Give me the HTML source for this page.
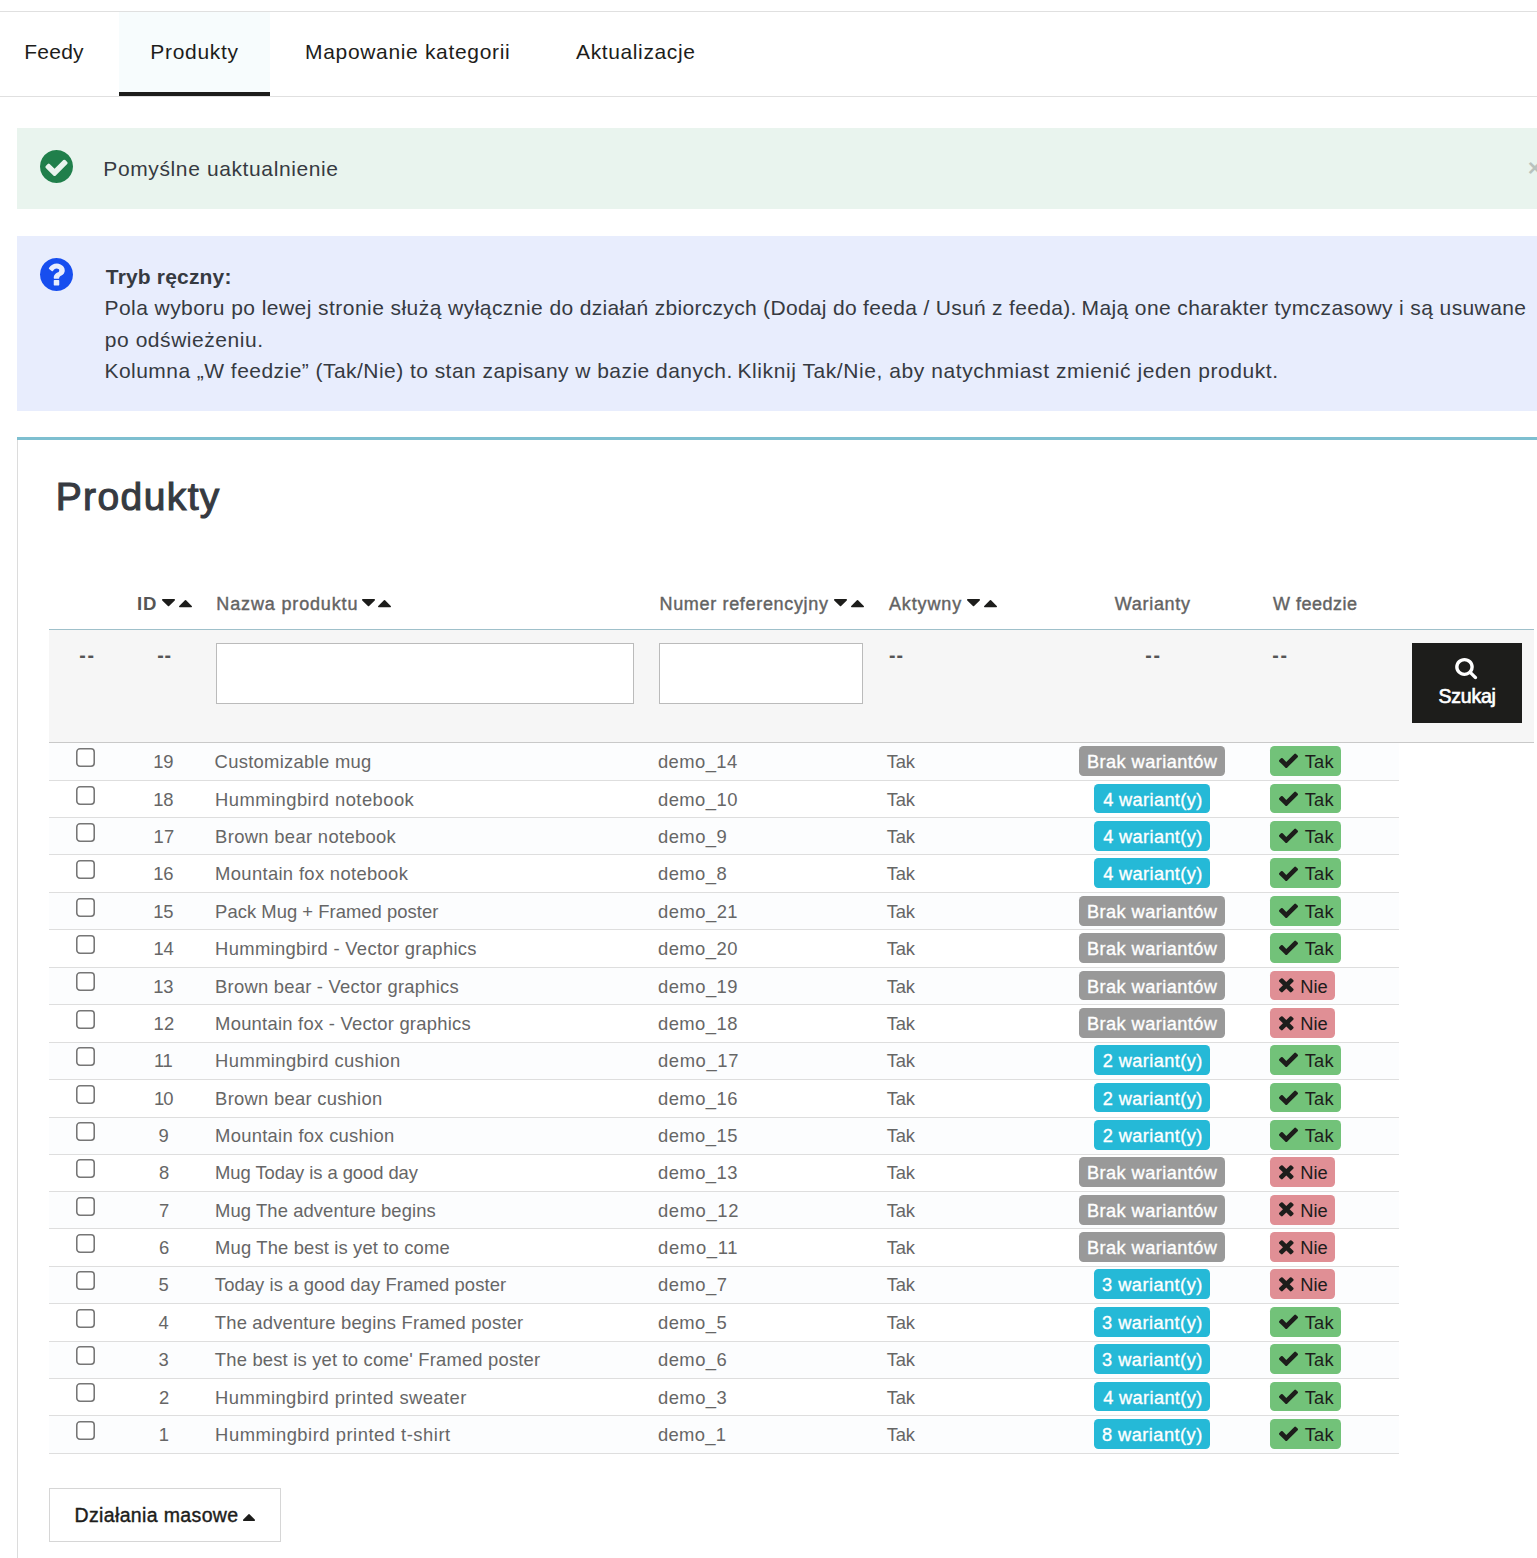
<!DOCTYPE html>
<html lang="pl"><head><meta charset="utf-8"><title>Produkty</title>
<style>
*{box-sizing:border-box}
html,body{margin:0;padding:0;background:#fff}
body{width:1537px;height:1558px;overflow:hidden;position:relative;font-family:"Liberation Sans",sans-serif;color:#363a41}
.abs,.t,.ic,.row,.bdg,.cb{position:absolute}
.t{white-space:nowrap;line-height:20px}
.ic{display:block;overflow:visible}
.tab{color:#1d1d1b}
.al{color:#363a41}
.th{color:#555;font-weight:bold}
.thm{color:#636363;-webkit-text-stroke:0.4px #636363}
.row{left:49px;width:1350px;border-bottom:1px solid #dedede}
.row.odd{background:#fcfdfe}
.c{color:#666}
.cb{width:19px;height:19px;border:1.5px solid #767676;border-radius:3.8px;background:#fff}
.bdg{border-radius:4.5px;height:29.8px}
.g{background:#999}
.b{background:#25b9d7}
.y{background:#72c279}
.n{background:#e08f95}
.fi{background:#fff;border:1px solid #bbb;border-radius:0;padding:0;margin:0;outline:0;-webkit-appearance:none;appearance:none;font:inherit}
.btn{padding:0;margin:0;border-radius:0;-webkit-appearance:none;appearance:none;font:inherit;text-align:left;cursor:pointer;overflow:visible}
nav,section{display:block}
.w{color:#fff}
.k{color:#1d1d1b}
</style></head><body>

<nav class="tabs">
<div class="abs" style="left:0;top:11px;width:1537px;height:1px;background:#e0e0e0"></div>
<div class="abs" style="left:0;top:96px;width:1537px;height:1px;background:#e0e0e0"></div>
<div class="abs" style="left:119px;top:12px;width:151px;height:84px;background:#f7fcfd;border-bottom:4px solid #1d1d1b"></div>
<span class="t tab" style="left:24.32px;top:41.7px;font-size:21px;letter-spacing:0.215px;">Feedy</span>
<span class="t tab" style="left:150.34px;top:41.7px;font-size:21px;letter-spacing:0.695px;">Produkty</span>
<span class="t tab" style="left:305.1px;top:41.7px;font-size:21px;letter-spacing:0.662px;">Mapowanie kategorii</span>
<span class="t tab" style="left:576.0px;top:41.7px;font-size:21px;letter-spacing:0.623px;">Aktualizacje</span>
</nav>
<div class="alert alert-success" role="alert">
<div class="abs" style="left:17px;top:128px;width:1520px;height:81px;background:#e9f4ee"></div>
<svg class="ic" style="left:40px;top:149.7px;width:33px;height:33px" viewBox="128 128 1536 1536" preserveAspectRatio="none" ><path fill="#207f4b" d="M1412 734q0-28-18-46l-91-90q-19-19-45-19t-45 19l-408 407-226-226q-19-19-45-19t-45 19l-91 90q-18 18-18 46 0 27 18 45l362 362q19 19 45 19 27 0 46-19l543-543q18-18 18-45zm252 162q0 209-103 385.500t-279.500 279.500-385.500 103-385.500-103-279.500-279.500-103-385.500 103-385.500 279.500-279.500 385.500-103 385.500 103 279.500 279.500 103 385.500z"/></svg>
<span class="t al" style="left:103.32px;top:159.0px;font-size:21px;letter-spacing:0.615px;">Pomyślne uaktualnienie</span>
<span class="t" style="left:1527.8px;top:152.2px;font-size:24px;font-weight:bold;color:#000;opacity:.2;line-height:32px">×</span>
</div>
<div class="alert alert-info" role="alert">
<div class="abs" style="left:17px;top:236px;width:1520px;height:175px;background:#e8edfd"></div>
<svg class="ic" style="left:40px;top:258px;width:33px;height:33px" viewBox="128 128 1536 1536" preserveAspectRatio="none" ><path fill="#174eef" d="M1024 1376v-192q0-14-9-23t-23-9h-192q-14 0-23 9t-9 23v192q0 14 9 23t23 9h192q14 0 23-9t9-23zm256-672q0-88-55.500-163t-138.500-116-170-41q-243 0-371 213-15 24 8 42l132 100q7 6 19 6 16 0 25-12 53-68 86-92 34-24 86-24 48 0 85.500 26t37.500 59q0 38-20 61t-68 45q-63 28-115.500 86.500t-52.500 125.500v36q0 14 9 23t23 9h192q14 0 23-9t9-23q0-19 21.500-49.500t54.500-49.500q32-18 49-28.500t46-35 44.500-48 28-60.500 12.500-81zm384 192q0 209-103 385.500t-279.500 279.500-385.500 103-385.500-103-279.500-279.500-103-385.500 103-385.500 279.500-279.500 385.500-103 385.500 103 279.500 279.500 103 385.500z"/></svg>
<span class="t al" style="left:105.81px;top:266.8px;font-size:21px;letter-spacing:0.176px;font-weight:bold">Tryb ręczny:</span>
<span class="t al" style="left:104.44px;top:298.1px;font-size:21px;letter-spacing:0.447px;">Pola wyboru po lewej stronie służą wyłącznie</span>
<span class="t al" style="left:549.62px;top:298.1px;font-size:21px;letter-spacing:0.313px;">do działań zbiorczych (Dodaj do feeda / Usuń z feeda).</span>
<span class="t al" style="left:1081.56px;top:298.1px;font-size:21px;letter-spacing:0.392px;">Mają one charakter tymczasowy i są usuwane</span>
<span class="t al" style="left:104.81px;top:329.5px;font-size:21px;letter-spacing:0.549px;">po odświeżeniu.</span>
<span class="t al" style="left:104.44px;top:361px;font-size:21px;letter-spacing:0.458px;">Kolumna „W feedzie” (Tak/Nie) to stan zapisany w bazie danych.</span>
<span class="t al" style="left:737.56px;top:361px;font-size:21px;letter-spacing:0.571px;">Kliknij Tak/Nie, aby natychmiast zmienić jeden produkt.</span>
</div>
<section class="panel">
<div class="abs" style="left:17px;top:437px;width:1520px;height:3px;background:#7ebfd0"></div>
<div class="abs" style="left:17px;top:440px;width:1px;height:1118px;background:#dcdcdc"></div>
<span class="t " style="left:55.68px;top:486.6px;font-size:39px;letter-spacing:1.398px;color:#363a41;-webkit-text-stroke:1.1px #363a41">Produkty</span>
<div class="table" role="table"><div class="thead" role="rowgroup">
<span class="t th" style="left:137.03px;top:593.5px;font-size:18.6px;letter-spacing:0.873px;">ID</span>
<svg class="ic" style="left:162px;top:599.0px;width:13px;height:7.3px" viewBox="384 640 1024 576" preserveAspectRatio="none" ><path fill="#1d1d1b" d="M1408 704q0 26-19 45l-448 448q-19 19-45 19t-45-19l-448-448q-19-19-19-45t19-45 45-19h896q26 0 45 19t19 45z"/></svg>
<svg class="ic" style="left:178.8px;top:600.0px;width:13px;height:7.3px" viewBox="384 704 1024 576" preserveAspectRatio="none" ><path fill="#1d1d1b" d="M1408 1216q0 26-19 45t-45 19h-896q-26 0-45-19t-19-45 19-45l448-448q19-19 45-19t45 19l448 448q19 19 19 45z"/></svg>
<span class="t thm" style="left:216.36px;top:593.5px;font-size:18px;letter-spacing:0.843px;">Nazwa produktu</span>
<svg class="ic" style="left:361.7px;top:599.0px;width:13px;height:7.3px" viewBox="384 640 1024 576" preserveAspectRatio="none" ><path fill="#1d1d1b" d="M1408 704q0 26-19 45l-448 448q-19 19-45 19t-45-19l-448-448q-19-19-19-45t19-45 45-19h896q26 0 45 19t19 45z"/></svg>
<svg class="ic" style="left:378px;top:600.0px;width:13px;height:7.3px" viewBox="384 704 1024 576" preserveAspectRatio="none" ><path fill="#1d1d1b" d="M1408 1216q0 26-19 45t-45 19h-896q-26 0-45-19t-19-45 19-45l448-448q19-19 45-19t45 19l448 448q19 19 19 45z"/></svg>
<span class="t thm" style="left:659.46px;top:593.5px;font-size:18px;letter-spacing:0.675px;">Numer referencyjny</span>
<svg class="ic" style="left:833.7px;top:599.0px;width:13px;height:7.3px" viewBox="384 640 1024 576" preserveAspectRatio="none" ><path fill="#1d1d1b" d="M1408 704q0 26-19 45l-448 448q-19 19-45 19t-45-19l-448-448q-19-19-19-45t19-45 45-19h896q26 0 45 19t19 45z"/></svg>
<svg class="ic" style="left:850.5px;top:600.0px;width:13px;height:7.3px" viewBox="384 704 1024 576" preserveAspectRatio="none" ><path fill="#1d1d1b" d="M1408 1216q0 26-19 45t-45 19h-896q-26 0-45-19t-19-45 19-45l448-448q19-19 45-19t45 19l448 448q19 19 19 45z"/></svg>
<span class="t thm" style="left:888.95px;top:593.5px;font-size:18px;letter-spacing:0.866px;">Aktywny</span>
<svg class="ic" style="left:967.3px;top:599.0px;width:13px;height:7.3px" viewBox="384 640 1024 576" preserveAspectRatio="none" ><path fill="#1d1d1b" d="M1408 704q0 26-19 45l-448 448q-19 19-45 19t-45-19l-448-448q-19-19-19-45t19-45 45-19h896q26 0 45 19t19 45z"/></svg>
<svg class="ic" style="left:983.8px;top:600.0px;width:13px;height:7.3px" viewBox="384 704 1024 576" preserveAspectRatio="none" ><path fill="#1d1d1b" d="M1408 1216q0 26-19 45t-45 19h-896q-26 0-45-19t-19-45 19-45l448-448q19-19 45-19t45 19l448 448q19 19 19 45z"/></svg>
<span class="t thm" style="left:1114.86px;top:593.5px;font-size:18px;letter-spacing:0.684px;">Warianty</span>
<span class="t thm" style="left:1272.9px;top:593.5px;font-size:18px;letter-spacing:0.515px;">W feedzie</span>
<div class="abs" style="left:49px;top:629px;width:1485px;height:1px;background:#9fc0ca"></div>
<div class="abs" style="left:49px;top:630px;width:1485px;height:112.5px;background:#f6f6f6"></div>
<div class="abs" style="left:49px;top:742px;width:1485px;height:1px;background:#c9c9c9"></div>
<span class="t th" style="left:79.27px;top:645.0px;font-size:19.5px;letter-spacing:1.715px;">--</span>
<span class="t th" style="left:157.17px;top:645.0px;font-size:19.5px;letter-spacing:0.915px;">--</span>
<span class="t th" style="left:889.12px;top:645.0px;font-size:19.5px;letter-spacing:0.915px;">--</span>
<span class="t th" style="left:1145.22px;top:645.0px;font-size:19.5px;letter-spacing:1.715px;">--</span>
<span class="t th" style="left:1272.22px;top:645.0px;font-size:19.5px;letter-spacing:1.715px;">--</span>
<input class="abs fi" type="text" name="filter_name" value="" style="left:216px;top:643px;width:418px;height:61px">
<input class="abs fi" type="text" name="filter_reference" value="" style="left:659px;top:643px;width:204px;height:61px">
<button class="abs btn" type="button" style="left:1412px;top:643px;width:110px;height:80px;background:#1d1d1b;border:0"><svg class="ic" style="left:44px;top:15.299999999999955px;width:21.2px;height:21.2px" viewBox="128 128 1600 1664" preserveAspectRatio="none" ><path fill="#fff" d="M1216 832q0-185-131.500-316.500t-316.500-131.500-316.500 131.500-131.500 316.500 131.500 316.500 316.500 131.500 316.500-131.500 131.500-316.500zm512 832q0 52-38 90t-90 38q-54 0-90-38l-343-342q-179 124-399 124-143 0-273.500-55.500t-225-150-150-225-55.500-273.500 55.500-273.500 150-225 225-150 273.500-55.500 273.500 55.500 225 150 150 225 55.500 273.500q0 220-124 399l343 343q37 37 37 90z"/></svg><span class="t w" style="left:26.58px;top:43px;font-size:19.5px;letter-spacing:-0.235px;-webkit-text-stroke:0.65px #fff">Szukaj</span></button>
</div><div class="tbody" role="rowgroup">
<div class="row odd" style="top:743px;height:38px"><svg class="ic" style="left:27px;top:5.2px;width:19px;height:19px" viewBox="0 0 19 19"><rect x="0.78" y="0.78" width="17.44" height="17.44" rx="3.2" ry="3.2" fill="#fff" stroke="#767676" stroke-width="1.56"/></svg><span class="t c" style="left:104.32px;top:9.3px;font-size:18.4px;letter-spacing:-0.302px;">19</span><span class="t c" style="left:165.59px;top:9.3px;font-size:18.4px;letter-spacing:0.291px;">Customizable mug</span><span class="t c" style="left:608.95px;top:9.3px;font-size:18.4px;letter-spacing:0.432px;">demo_14</span><span class="t c" style="left:837.63px;top:9.3px;font-size:18.4px;letter-spacing:-0.095px;">Tak</span><span class="bdg g" style="left:1030.2px;top:3.3px;width:145.8px"></span><span class="t w" style="left:1038.0px;top:9.3px;font-size:18.2px;letter-spacing:0.431px;-webkit-text-stroke:0.35px #fff">Brak wariantów</span><span class="bdg y" style="left:1221px;top:3.3px;width:71px"></span><svg class="ic" style="left:1230.3px;top:10.4px;width:19px;height:15.1px" viewBox="121 285 1550 1237" preserveAspectRatio="none" ><path fill="#1d1d1b" d="M1671 566q0 40-28 68l-724 724-136 136q-28 28-68 28t-68-28l-136-136-362-362q-28-28-28-68t28-68l136-136q28-28 68-28t68 28l294 295 656-657q28-28 68-28t68 28l136 136q28 28 28 68z"/></svg><span class="t k" style="left:1255.63px;top:9.3px;font-size:18.3px;letter-spacing:0.272px;">Tak</span></div>
<div class="row" style="top:781px;height:37px"><svg class="ic" style="left:27px;top:4.57px;width:19px;height:19px" viewBox="0 0 19 19"><rect x="0.78" y="0.78" width="17.44" height="17.44" rx="3.2" ry="3.2" fill="#fff" stroke="#767676" stroke-width="1.56"/></svg><span class="t c" style="left:104.17px;top:8.67px;font-size:18.4px;letter-spacing:-0.081px;">18</span><span class="t c" style="left:166.11px;top:8.67px;font-size:18.4px;letter-spacing:0.449px;">Hummingbird notebook</span><span class="t c" style="left:608.95px;top:8.67px;font-size:18.4px;letter-spacing:0.463px;">demo_10</span><span class="t c" style="left:837.63px;top:8.67px;font-size:18.4px;letter-spacing:-0.095px;">Tak</span><span class="bdg b" style="left:1044.8px;top:2.67px;width:116.4px"></span><span class="t w" style="left:1054.17px;top:8.67px;font-size:18.2px;letter-spacing:0.37px;-webkit-text-stroke:0.35px #fff">4 wariant(y)</span><span class="bdg y" style="left:1221px;top:2.67px;width:71px"></span><svg class="ic" style="left:1230.3px;top:9.77px;width:19px;height:15.1px" viewBox="121 285 1550 1237" preserveAspectRatio="none" ><path fill="#1d1d1b" d="M1671 566q0 40-28 68l-724 724-136 136q-28 28-68 28t-68-28l-136-136-362-362q-28-28-28-68t28-68l136-136q28-28 68-28t68 28l294 295 656-657q28-28 68-28t68 28l136 136q28 28 28 68z"/></svg><span class="t k" style="left:1255.63px;top:8.67px;font-size:18.3px;letter-spacing:0.272px;">Tak</span></div>
<div class="row odd" style="top:818px;height:37px"><svg class="ic" style="left:27px;top:4.94px;width:19px;height:19px" viewBox="0 0 19 19"><rect x="0.78" y="0.78" width="17.44" height="17.44" rx="3.2" ry="3.2" fill="#fff" stroke="#767676" stroke-width="1.56"/></svg><span class="t c" style="left:104.4px;top:9.04px;font-size:18.4px;letter-spacing:0.388px;">17</span><span class="t c" style="left:166.11px;top:9.04px;font-size:18.4px;letter-spacing:0.325px;">Brown bear notebook</span><span class="t c" style="left:608.95px;top:9.04px;font-size:18.4px;letter-spacing:0.482px;">demo_9</span><span class="t c" style="left:837.63px;top:9.04px;font-size:18.4px;letter-spacing:-0.095px;">Tak</span><span class="bdg b" style="left:1044.8px;top:3.04px;width:116.4px"></span><span class="t w" style="left:1054.17px;top:9.04px;font-size:18.2px;letter-spacing:0.37px;-webkit-text-stroke:0.35px #fff">4 wariant(y)</span><span class="bdg y" style="left:1221px;top:3.04px;width:71px"></span><svg class="ic" style="left:1230.3px;top:10.14px;width:19px;height:15.1px" viewBox="121 285 1550 1237" preserveAspectRatio="none" ><path fill="#1d1d1b" d="M1671 566q0 40-28 68l-724 724-136 136q-28 28-68 28t-68-28l-136-136-362-362q-28-28-28-68t28-68l136-136q28-28 68-28t68 28l294 295 656-657q28-28 68-28t68 28l136 136q28 28 28 68z"/></svg><span class="t k" style="left:1255.63px;top:9.04px;font-size:18.3px;letter-spacing:0.272px;">Tak</span></div>
<div class="row" style="top:855px;height:38px"><svg class="ic" style="left:27px;top:5.31px;width:19px;height:19px" viewBox="0 0 19 19"><rect x="0.78" y="0.78" width="17.44" height="17.44" rx="3.2" ry="3.2" fill="#fff" stroke="#767676" stroke-width="1.56"/></svg><span class="t c" style="left:104.24px;top:9.41px;font-size:18.4px;letter-spacing:-0.191px;">16</span><span class="t c" style="left:166.11px;top:9.41px;font-size:18.4px;letter-spacing:0.334px;">Mountain fox notebook</span><span class="t c" style="left:608.95px;top:9.41px;font-size:18.4px;letter-spacing:0.464px;">demo_8</span><span class="t c" style="left:837.63px;top:9.41px;font-size:18.4px;letter-spacing:-0.095px;">Tak</span><span class="bdg b" style="left:1044.8px;top:3.41px;width:116.4px"></span><span class="t w" style="left:1054.17px;top:9.41px;font-size:18.2px;letter-spacing:0.37px;-webkit-text-stroke:0.35px #fff">4 wariant(y)</span><span class="bdg y" style="left:1221px;top:3.41px;width:71px"></span><svg class="ic" style="left:1230.3px;top:10.51px;width:19px;height:15.1px" viewBox="121 285 1550 1237" preserveAspectRatio="none" ><path fill="#1d1d1b" d="M1671 566q0 40-28 68l-724 724-136 136q-28 28-68 28t-68-28l-136-136-362-362q-28-28-28-68t28-68l136-136q28-28 68-28t68 28l294 295 656-657q28-28 68-28t68 28l136 136q28 28 28 68z"/></svg><span class="t k" style="left:1255.63px;top:9.41px;font-size:18.3px;letter-spacing:0.272px;">Tak</span></div>
<div class="row odd" style="top:893px;height:37px"><svg class="ic" style="left:27px;top:4.68px;width:19px;height:19px" viewBox="0 0 19 19"><rect x="0.78" y="0.78" width="17.44" height="17.44" rx="3.2" ry="3.2" fill="#fff" stroke="#767676" stroke-width="1.56"/></svg><span class="t c" style="left:104.17px;top:8.78px;font-size:18.4px;letter-spacing:-0.081px;">15</span><span class="t c" style="left:166.11px;top:8.78px;font-size:18.4px;letter-spacing:0.039px;">Pack Mug + Framed poster</span><span class="t c" style="left:608.95px;top:8.78px;font-size:18.4px;letter-spacing:0.493px;">demo_21</span><span class="t c" style="left:837.63px;top:8.78px;font-size:18.4px;letter-spacing:-0.095px;">Tak</span><span class="bdg g" style="left:1030.2px;top:2.78px;width:145.8px"></span><span class="t w" style="left:1038.0px;top:8.78px;font-size:18.2px;letter-spacing:0.431px;-webkit-text-stroke:0.35px #fff">Brak wariantów</span><span class="bdg y" style="left:1221px;top:2.78px;width:71px"></span><svg class="ic" style="left:1230.3px;top:9.88px;width:19px;height:15.1px" viewBox="121 285 1550 1237" preserveAspectRatio="none" ><path fill="#1d1d1b" d="M1671 566q0 40-28 68l-724 724-136 136q-28 28-68 28t-68-28l-136-136-362-362q-28-28-28-68t28-68l136-136q28-28 68-28t68 28l294 295 656-657q28-28 68-28t68 28l136 136q28 28 28 68z"/></svg><span class="t k" style="left:1255.63px;top:8.78px;font-size:18.3px;letter-spacing:0.272px;">Tak</span></div>
<div class="row" style="top:930px;height:38px"><svg class="ic" style="left:27px;top:5.05px;width:19px;height:19px" viewBox="0 0 19 19"><rect x="0.78" y="0.78" width="17.44" height="17.44" rx="3.2" ry="3.2" fill="#fff" stroke="#767676" stroke-width="1.56"/></svg><span class="t c" style="left:104.58px;top:9.15px;font-size:18.4px;letter-spacing:-0.329px;">14</span><span class="t c" style="left:166.11px;top:9.15px;font-size:18.4px;letter-spacing:0.321px;">Hummingbird - Vector graphics</span><span class="t c" style="left:608.95px;top:9.15px;font-size:18.4px;letter-spacing:0.463px;">demo_20</span><span class="t c" style="left:837.63px;top:9.15px;font-size:18.4px;letter-spacing:-0.095px;">Tak</span><span class="bdg g" style="left:1030.2px;top:3.15px;width:145.8px"></span><span class="t w" style="left:1038.0px;top:9.15px;font-size:18.2px;letter-spacing:0.431px;-webkit-text-stroke:0.35px #fff">Brak wariantów</span><span class="bdg y" style="left:1221px;top:3.15px;width:71px"></span><svg class="ic" style="left:1230.3px;top:10.25px;width:19px;height:15.1px" viewBox="121 285 1550 1237" preserveAspectRatio="none" ><path fill="#1d1d1b" d="M1671 566q0 40-28 68l-724 724-136 136q-28 28-68 28t-68-28l-136-136-362-362q-28-28-28-68t28-68l136-136q28-28 68-28t68 28l294 295 656-657q28-28 68-28t68 28l136 136q28 28 28 68z"/></svg><span class="t k" style="left:1255.63px;top:9.15px;font-size:18.3px;letter-spacing:0.272px;">Tak</span></div>
<div class="row odd" style="top:968px;height:37px"><svg class="ic" style="left:27px;top:4.42px;width:19px;height:19px" viewBox="0 0 19 19"><rect x="0.78" y="0.78" width="17.44" height="17.44" rx="3.2" ry="3.2" fill="#fff" stroke="#767676" stroke-width="1.56"/></svg><span class="t c" style="left:104.24px;top:8.52px;font-size:18.4px;letter-spacing:-0.191px;">13</span><span class="t c" style="left:166.11px;top:8.52px;font-size:18.4px;letter-spacing:0.234px;">Brown bear - Vector graphics</span><span class="t c" style="left:608.95px;top:8.52px;font-size:18.4px;letter-spacing:0.486px;">demo_19</span><span class="t c" style="left:837.63px;top:8.52px;font-size:18.4px;letter-spacing:-0.095px;">Tak</span><span class="bdg g" style="left:1030.2px;top:2.52px;width:145.8px"></span><span class="t w" style="left:1038.0px;top:8.52px;font-size:18.2px;letter-spacing:0.431px;-webkit-text-stroke:0.35px #fff">Brak wariantów</span><span class="bdg n" style="left:1221px;top:2.52px;width:65px"></span><svg class="ic" style="left:1230.3px;top:10.17px;width:14.6px;height:14.4px" viewBox="302 354 1188 1200" preserveAspectRatio="none" ><path fill="#1d1d1b" d="M1490 1322q0 40-28 68l-136 136q-28 28-68 28t-68-28l-294-294-294 294q-28 28-68 28t-68-28l-136-136q-28-28-28-68t28-68l294-294-294-294q-28-28-28-68t28-68l136-136q28-28 68-28t68 28l294 294 294-294q28-28 68-28t68 28l136 136q28 28 28 68t-28 68l-294 294 294 294q28 28 28 68z"/></svg><span class="t k" style="left:1251.22px;top:8.52px;font-size:18.3px;letter-spacing:-0.004px;">Nie</span></div>
<div class="row" style="top:1005px;height:38px"><svg class="ic" style="left:27px;top:4.79px;width:19px;height:19px" viewBox="0 0 19 19"><rect x="0.78" y="0.78" width="17.44" height="17.44" rx="3.2" ry="3.2" fill="#fff" stroke="#767676" stroke-width="1.56"/></svg><span class="t c" style="left:104.4px;top:8.89px;font-size:18.4px;letter-spacing:0.388px;">12</span><span class="t c" style="left:166.11px;top:8.89px;font-size:18.4px;letter-spacing:0.245px;">Mountain fox - Vector graphics</span><span class="t c" style="left:608.95px;top:8.89px;font-size:18.4px;letter-spacing:0.47px;">demo_18</span><span class="t c" style="left:837.63px;top:8.89px;font-size:18.4px;letter-spacing:-0.095px;">Tak</span><span class="bdg g" style="left:1030.2px;top:2.89px;width:145.8px"></span><span class="t w" style="left:1038.0px;top:8.89px;font-size:18.2px;letter-spacing:0.431px;-webkit-text-stroke:0.35px #fff">Brak wariantów</span><span class="bdg n" style="left:1221px;top:2.89px;width:65px"></span><svg class="ic" style="left:1230.3px;top:10.54px;width:14.6px;height:14.4px" viewBox="302 354 1188 1200" preserveAspectRatio="none" ><path fill="#1d1d1b" d="M1490 1322q0 40-28 68l-136 136q-28 28-68 28t-68-28l-294-294-294 294q-28 28-68 28t-68-28l-136-136q-28-28-28-68t28-68l294-294-294-294q-28-28-28-68t28-68l136-136q28-28 68-28t68 28l294 294 294-294q28-28 68-28t68 28l136 136q28 28 28 68t-28 68l-294 294 294 294q28 28 28 68z"/></svg><span class="t k" style="left:1251.22px;top:8.89px;font-size:18.3px;letter-spacing:-0.004px;">Nie</span></div>
<div class="row odd" style="top:1043px;height:37px"><svg class="ic" style="left:27px;top:4.16px;width:19px;height:19px" viewBox="0 0 19 19"><rect x="0.78" y="0.78" width="17.44" height="17.44" rx="3.2" ry="3.2" fill="#fff" stroke="#767676" stroke-width="1.56"/></svg><span class="t c" style="left:105.07px;top:8.26px;font-size:18.4px;letter-spacing:-0.414px;">11</span><span class="t c" style="left:166.11px;top:8.26px;font-size:18.4px;letter-spacing:0.401px;">Hummingbird cushion</span><span class="t c" style="left:608.95px;top:8.26px;font-size:18.4px;letter-spacing:0.627px;">demo_17</span><span class="t c" style="left:837.63px;top:8.26px;font-size:18.4px;letter-spacing:-0.095px;">Tak</span><span class="bdg b" style="left:1044.8px;top:2.26px;width:116.4px"></span><span class="t w" style="left:1053.67px;top:8.26px;font-size:18.2px;letter-spacing:0.416px;-webkit-text-stroke:0.35px #fff">2 wariant(y)</span><span class="bdg y" style="left:1221px;top:2.26px;width:71px"></span><svg class="ic" style="left:1230.3px;top:9.36px;width:19px;height:15.1px" viewBox="121 285 1550 1237" preserveAspectRatio="none" ><path fill="#1d1d1b" d="M1671 566q0 40-28 68l-724 724-136 136q-28 28-68 28t-68-28l-136-136-362-362q-28-28-28-68t28-68l136-136q28-28 68-28t68 28l294 295 656-657q28-28 68-28t68 28l136 136q28 28 28 68z"/></svg><span class="t k" style="left:1255.63px;top:8.26px;font-size:18.3px;letter-spacing:0.272px;">Tak</span></div>
<div class="row" style="top:1080px;height:38px"><svg class="ic" style="left:27px;top:4.53px;width:19px;height:19px" viewBox="0 0 19 19"><rect x="0.78" y="0.78" width="17.44" height="17.44" rx="3.2" ry="3.2" fill="#fff" stroke="#767676" stroke-width="1.56"/></svg><span class="t c" style="left:104.89px;top:8.63px;font-size:18.4px;letter-spacing:-0.77px;">10</span><span class="t c" style="left:166.11px;top:8.63px;font-size:18.4px;letter-spacing:0.266px;">Brown bear cushion</span><span class="t c" style="left:608.95px;top:8.63px;font-size:18.4px;letter-spacing:0.478px;">demo_16</span><span class="t c" style="left:837.63px;top:8.63px;font-size:18.4px;letter-spacing:-0.095px;">Tak</span><span class="bdg b" style="left:1044.8px;top:2.63px;width:116.4px"></span><span class="t w" style="left:1053.67px;top:8.63px;font-size:18.2px;letter-spacing:0.416px;-webkit-text-stroke:0.35px #fff">2 wariant(y)</span><span class="bdg y" style="left:1221px;top:2.63px;width:71px"></span><svg class="ic" style="left:1230.3px;top:9.73px;width:19px;height:15.1px" viewBox="121 285 1550 1237" preserveAspectRatio="none" ><path fill="#1d1d1b" d="M1671 566q0 40-28 68l-724 724-136 136q-28 28-68 28t-68-28l-136-136-362-362q-28-28-28-68t28-68l136-136q28-28 68-28t68 28l294 295 656-657q28-28 68-28t68 28l136 136q28 28 28 68z"/></svg><span class="t k" style="left:1255.63px;top:8.63px;font-size:18.3px;letter-spacing:0.272px;">Tak</span></div>
<div class="row odd" style="top:1118px;height:37px"><svg class="ic" style="left:27px;top:3.9px;width:19px;height:19px" viewBox="0 0 19 19"><rect x="0.78" y="0.78" width="17.44" height="17.44" rx="3.2" ry="3.2" fill="#fff" stroke="#767676" stroke-width="1.56"/></svg><span class="t c" style="left:109.55px;top:8.0px;font-size:18.4px;letter-spacing:0px;">9</span><span class="t c" style="left:166.11px;top:8.0px;font-size:18.4px;letter-spacing:0.279px;">Mountain fox cushion</span><span class="t c" style="left:608.95px;top:8.0px;font-size:18.4px;letter-spacing:0.47px;">demo_15</span><span class="t c" style="left:837.63px;top:8.0px;font-size:18.4px;letter-spacing:-0.095px;">Tak</span><span class="bdg b" style="left:1044.8px;top:2.0px;width:116.4px"></span><span class="t w" style="left:1053.67px;top:8.0px;font-size:18.2px;letter-spacing:0.416px;-webkit-text-stroke:0.35px #fff">2 wariant(y)</span><span class="bdg y" style="left:1221px;top:2.0px;width:71px"></span><svg class="ic" style="left:1230.3px;top:9.1px;width:19px;height:15.1px" viewBox="121 285 1550 1237" preserveAspectRatio="none" ><path fill="#1d1d1b" d="M1671 566q0 40-28 68l-724 724-136 136q-28 28-68 28t-68-28l-136-136-362-362q-28-28-28-68t28-68l136-136q28-28 68-28t68 28l294 295 656-657q28-28 68-28t68 28l136 136q28 28 28 68z"/></svg><span class="t k" style="left:1255.63px;top:8.0px;font-size:18.3px;letter-spacing:0.272px;">Tak</span></div>
<div class="row" style="top:1155px;height:37px"><svg class="ic" style="left:27px;top:4.27px;width:19px;height:19px" viewBox="0 0 19 19"><rect x="0.78" y="0.78" width="17.44" height="17.44" rx="3.2" ry="3.2" fill="#fff" stroke="#767676" stroke-width="1.56"/></svg><span class="t c" style="left:109.93px;top:8.37px;font-size:18.4px;letter-spacing:0px;">8</span><span class="t c" style="left:166.11px;top:8.37px;font-size:18.4px;letter-spacing:-0.059px;">Mug Today is a good day</span><span class="t c" style="left:608.95px;top:8.37px;font-size:18.4px;letter-spacing:0.478px;">demo_13</span><span class="t c" style="left:837.63px;top:8.37px;font-size:18.4px;letter-spacing:-0.095px;">Tak</span><span class="bdg g" style="left:1030.2px;top:2.37px;width:145.8px"></span><span class="t w" style="left:1038.0px;top:8.37px;font-size:18.2px;letter-spacing:0.431px;-webkit-text-stroke:0.35px #fff">Brak wariantów</span><span class="bdg n" style="left:1221px;top:2.37px;width:65px"></span><svg class="ic" style="left:1230.3px;top:10.02px;width:14.6px;height:14.4px" viewBox="302 354 1188 1200" preserveAspectRatio="none" ><path fill="#1d1d1b" d="M1490 1322q0 40-28 68l-136 136q-28 28-68 28t-68-28l-294-294-294 294q-28 28-68 28t-68-28l-136-136q-28-28-28-68t28-68l294-294-294-294q-28-28-28-68t28-68l136-136q28-28 68-28t68 28l294 294 294-294q28-28 68-28t68 28l136 136q28 28 28 68t-28 68l-294 294 294 294q28 28 28 68z"/></svg><span class="t k" style="left:1251.22px;top:8.37px;font-size:18.3px;letter-spacing:-0.004px;">Nie</span></div>
<div class="row odd" style="top:1192px;height:37px"><svg class="ic" style="left:27px;top:4.64px;width:19px;height:19px" viewBox="0 0 19 19"><rect x="0.78" y="0.78" width="17.44" height="17.44" rx="3.2" ry="3.2" fill="#fff" stroke="#767676" stroke-width="1.56"/></svg><span class="t c" style="left:109.93px;top:8.74px;font-size:18.4px;letter-spacing:0px;">7</span><span class="t c" style="left:166.11px;top:8.74px;font-size:18.4px;letter-spacing:0.091px;">Mug The adventure begins</span><span class="t c" style="left:608.95px;top:8.74px;font-size:18.4px;letter-spacing:0.627px;">demo_12</span><span class="t c" style="left:837.63px;top:8.74px;font-size:18.4px;letter-spacing:-0.095px;">Tak</span><span class="bdg g" style="left:1030.2px;top:2.74px;width:145.8px"></span><span class="t w" style="left:1038.0px;top:8.74px;font-size:18.2px;letter-spacing:0.431px;-webkit-text-stroke:0.35px #fff">Brak wariantów</span><span class="bdg n" style="left:1221px;top:2.74px;width:65px"></span><svg class="ic" style="left:1230.3px;top:10.39px;width:14.6px;height:14.4px" viewBox="302 354 1188 1200" preserveAspectRatio="none" ><path fill="#1d1d1b" d="M1490 1322q0 40-28 68l-136 136q-28 28-68 28t-68-28l-294-294-294 294q-28 28-68 28t-68-28l-136-136q-28-28-28-68t28-68l294-294-294-294q-28-28-28-68t28-68l136-136q28-28 68-28t68 28l294 294 294-294q28-28 68-28t68 28l136 136q28 28 28 68t-28 68l-294 294 294 294q28 28 28 68z"/></svg><span class="t k" style="left:1251.22px;top:8.74px;font-size:18.3px;letter-spacing:-0.004px;">Nie</span></div>
<div class="row" style="top:1229px;height:38px"><svg class="ic" style="left:27px;top:5.01px;width:19px;height:19px" viewBox="0 0 19 19"><rect x="0.78" y="0.78" width="17.44" height="17.44" rx="3.2" ry="3.2" fill="#fff" stroke="#767676" stroke-width="1.56"/></svg><span class="t c" style="left:109.89px;top:9.11px;font-size:18.4px;letter-spacing:0px;">6</span><span class="t c" style="left:166.11px;top:9.11px;font-size:18.4px;letter-spacing:0.15px;">Mug The best is yet to come</span><span class="t c" style="left:608.95px;top:9.11px;font-size:18.4px;letter-spacing:0.723px;">demo_11</span><span class="t c" style="left:837.63px;top:9.11px;font-size:18.4px;letter-spacing:-0.095px;">Tak</span><span class="bdg g" style="left:1030.2px;top:3.11px;width:145.8px"></span><span class="t w" style="left:1038.0px;top:9.11px;font-size:18.2px;letter-spacing:0.431px;-webkit-text-stroke:0.35px #fff">Brak wariantów</span><span class="bdg n" style="left:1221px;top:3.11px;width:65px"></span><svg class="ic" style="left:1230.3px;top:10.76px;width:14.6px;height:14.4px" viewBox="302 354 1188 1200" preserveAspectRatio="none" ><path fill="#1d1d1b" d="M1490 1322q0 40-28 68l-136 136q-28 28-68 28t-68-28l-294-294-294 294q-28 28-68 28t-68-28l-136-136q-28-28-28-68t28-68l294-294-294-294q-28-28-28-68t28-68l136-136q28-28 68-28t68 28l294 294 294-294q28-28 68-28t68 28l136 136q28 28 28 68t-28 68l-294 294 294 294q28 28 28 68z"/></svg><span class="t k" style="left:1251.22px;top:9.11px;font-size:18.3px;letter-spacing:-0.004px;">Nie</span></div>
<div class="row odd" style="top:1267px;height:37px"><svg class="ic" style="left:27px;top:4.38px;width:19px;height:19px" viewBox="0 0 19 19"><rect x="0.78" y="0.78" width="17.44" height="17.44" rx="3.2" ry="3.2" fill="#fff" stroke="#767676" stroke-width="1.56"/></svg><span class="t c" style="left:109.55px;top:8.48px;font-size:18.4px;letter-spacing:0px;">5</span><span class="t c" style="left:165.86px;top:8.48px;font-size:18.4px;letter-spacing:0.092px;">Today is a good day Framed poster</span><span class="t c" style="left:608.95px;top:8.48px;font-size:18.4px;letter-spacing:0.492px;">demo_7</span><span class="t c" style="left:837.63px;top:8.48px;font-size:18.4px;letter-spacing:-0.095px;">Tak</span><span class="bdg b" style="left:1044.8px;top:2.48px;width:116.4px"></span><span class="t w" style="left:1053.1px;top:8.48px;font-size:18.2px;letter-spacing:0.468px;-webkit-text-stroke:0.35px #fff">3 wariant(y)</span><span class="bdg n" style="left:1221px;top:2.48px;width:65px"></span><svg class="ic" style="left:1230.3px;top:10.13px;width:14.6px;height:14.4px" viewBox="302 354 1188 1200" preserveAspectRatio="none" ><path fill="#1d1d1b" d="M1490 1322q0 40-28 68l-136 136q-28 28-68 28t-68-28l-294-294-294 294q-28 28-68 28t-68-28l-136-136q-28-28-28-68t28-68l294-294-294-294q-28-28-28-68t28-68l136-136q28-28 68-28t68 28l294 294 294-294q28-28 68-28t68 28l136 136q28 28 28 68t-28 68l-294 294 294 294q28 28 28 68z"/></svg><span class="t k" style="left:1251.22px;top:8.48px;font-size:18.3px;letter-spacing:-0.004px;">Nie</span></div>
<div class="row" style="top:1304px;height:38px"><svg class="ic" style="left:27px;top:4.75px;width:19px;height:19px" viewBox="0 0 19 19"><rect x="0.78" y="0.78" width="17.44" height="17.44" rx="3.2" ry="3.2" fill="#fff" stroke="#767676" stroke-width="1.56"/></svg><span class="t c" style="left:109.6px;top:8.85px;font-size:18.4px;letter-spacing:0px;">4</span><span class="t c" style="left:165.86px;top:8.85px;font-size:18.4px;letter-spacing:0.174px;">The adventure begins Framed poster</span><span class="t c" style="left:608.95px;top:8.85px;font-size:18.4px;letter-spacing:0.464px;">demo_5</span><span class="t c" style="left:837.63px;top:8.85px;font-size:18.4px;letter-spacing:-0.095px;">Tak</span><span class="bdg b" style="left:1044.8px;top:2.85px;width:116.4px"></span><span class="t w" style="left:1053.1px;top:8.85px;font-size:18.2px;letter-spacing:0.468px;-webkit-text-stroke:0.35px #fff">3 wariant(y)</span><span class="bdg y" style="left:1221px;top:2.85px;width:71px"></span><svg class="ic" style="left:1230.3px;top:9.95px;width:19px;height:15.1px" viewBox="121 285 1550 1237" preserveAspectRatio="none" ><path fill="#1d1d1b" d="M1671 566q0 40-28 68l-724 724-136 136q-28 28-68 28t-68-28l-136-136-362-362q-28-28-28-68t28-68l136-136q28-28 68-28t68 28l294 295 656-657q28-28 68-28t68 28l136 136q28 28 28 68z"/></svg><span class="t k" style="left:1255.63px;top:8.85px;font-size:18.3px;letter-spacing:0.272px;">Tak</span></div>
<div class="row odd" style="top:1342px;height:37px"><svg class="ic" style="left:27px;top:4.12px;width:19px;height:19px" viewBox="0 0 19 19"><rect x="0.78" y="0.78" width="17.44" height="17.44" rx="3.2" ry="3.2" fill="#fff" stroke="#767676" stroke-width="1.56"/></svg><span class="t c" style="left:109.6px;top:8.22px;font-size:18.4px;letter-spacing:0px;">3</span><span class="t c" style="left:165.86px;top:8.22px;font-size:18.4px;letter-spacing:0.187px;">The best is yet to come' Framed poster</span><span class="t c" style="left:608.95px;top:8.22px;font-size:18.4px;letter-spacing:0.473px;">demo_6</span><span class="t c" style="left:837.63px;top:8.22px;font-size:18.4px;letter-spacing:-0.095px;">Tak</span><span class="bdg b" style="left:1044.8px;top:2.22px;width:116.4px"></span><span class="t w" style="left:1053.1px;top:8.22px;font-size:18.2px;letter-spacing:0.468px;-webkit-text-stroke:0.35px #fff">3 wariant(y)</span><span class="bdg y" style="left:1221px;top:2.22px;width:71px"></span><svg class="ic" style="left:1230.3px;top:9.32px;width:19px;height:15.1px" viewBox="121 285 1550 1237" preserveAspectRatio="none" ><path fill="#1d1d1b" d="M1671 566q0 40-28 68l-724 724-136 136q-28 28-68 28t-68-28l-136-136-362-362q-28-28-28-68t28-68l136-136q28-28 68-28t68 28l294 295 656-657q28-28 68-28t68 28l136 136q28 28 28 68z"/></svg><span class="t k" style="left:1255.63px;top:8.22px;font-size:18.3px;letter-spacing:0.272px;">Tak</span></div>
<div class="row" style="top:1379px;height:37px"><svg class="ic" style="left:27px;top:4.49px;width:19px;height:19px" viewBox="0 0 19 19"><rect x="0.78" y="0.78" width="17.44" height="17.44" rx="3.2" ry="3.2" fill="#fff" stroke="#767676" stroke-width="1.56"/></svg><span class="t c" style="left:109.93px;top:8.59px;font-size:18.4px;letter-spacing:0px;">2</span><span class="t c" style="left:166.11px;top:8.59px;font-size:18.4px;letter-spacing:0.423px;">Hummingbird printed sweater</span><span class="t c" style="left:608.95px;top:8.59px;font-size:18.4px;letter-spacing:0.473px;">demo_3</span><span class="t c" style="left:837.63px;top:8.59px;font-size:18.4px;letter-spacing:-0.095px;">Tak</span><span class="bdg b" style="left:1044.8px;top:2.59px;width:116.4px"></span><span class="t w" style="left:1054.17px;top:8.59px;font-size:18.2px;letter-spacing:0.37px;-webkit-text-stroke:0.35px #fff">4 wariant(y)</span><span class="bdg y" style="left:1221px;top:2.59px;width:71px"></span><svg class="ic" style="left:1230.3px;top:9.69px;width:19px;height:15.1px" viewBox="121 285 1550 1237" preserveAspectRatio="none" ><path fill="#1d1d1b" d="M1671 566q0 40-28 68l-724 724-136 136q-28 28-68 28t-68-28l-136-136-362-362q-28-28-28-68t28-68l136-136q28-28 68-28t68 28l294 295 656-657q28-28 68-28t68 28l136 136q28 28 28 68z"/></svg><span class="t k" style="left:1255.63px;top:8.59px;font-size:18.3px;letter-spacing:0.272px;">Tak</span></div>
<div class="row odd" style="top:1416px;height:38px"><svg class="ic" style="left:27px;top:4.86px;width:19px;height:19px" viewBox="0 0 19 19"><rect x="0.78" y="0.78" width="17.44" height="17.44" rx="3.2" ry="3.2" fill="#fff" stroke="#767676" stroke-width="1.56"/></svg><span class="t c" style="left:109.7px;top:8.96px;font-size:18.4px;letter-spacing:0px;">1</span><span class="t c" style="left:166.11px;top:8.96px;font-size:18.4px;letter-spacing:0.509px;">Hummingbird printed t-shirt</span><span class="t c" style="left:608.95px;top:8.96px;font-size:18.4px;letter-spacing:0.332px;">demo_1</span><span class="t c" style="left:837.63px;top:8.96px;font-size:18.4px;letter-spacing:-0.095px;">Tak</span><span class="bdg b" style="left:1044.8px;top:2.96px;width:116.4px"></span><span class="t w" style="left:1053.01px;top:8.96px;font-size:18.2px;letter-spacing:0.476px;-webkit-text-stroke:0.35px #fff">8 wariant(y)</span><span class="bdg y" style="left:1221px;top:2.96px;width:71px"></span><svg class="ic" style="left:1230.3px;top:10.06px;width:19px;height:15.1px" viewBox="121 285 1550 1237" preserveAspectRatio="none" ><path fill="#1d1d1b" d="M1671 566q0 40-28 68l-724 724-136 136q-28 28-68 28t-68-28l-136-136-362-362q-28-28-28-68t28-68l136-136q28-28 68-28t68 28l294 295 656-657q28-28 68-28t68 28l136 136q28 28 28 68z"/></svg><span class="t k" style="left:1255.63px;top:8.96px;font-size:18.3px;letter-spacing:0.272px;">Tak</span></div>
</div></div>
<button class="abs btn" type="button" style="left:49px;top:1488px;width:232px;height:54px;background:#fff;border:1px solid #d6d6d6"><span class="t k" style="left:24.56px;top:16.2px;font-size:19.5px;letter-spacing:0.356px;-webkit-text-stroke:0.4px #1d1d1b">Działania masowe</span><svg class="ic" style="left:193px;top:25.40000000000009px;width:12px;height:6.9px" viewBox="384 704 1024 576" preserveAspectRatio="none" ><path fill="#1d1d1b" d="M1408 1216q0 26-19 45t-45 19h-896q-26 0-45-19t-19-45 19-45l448-448q19-19 45-19t45 19l448 448q19 19 19 45z"/></svg></button>
</section>
</body></html>
